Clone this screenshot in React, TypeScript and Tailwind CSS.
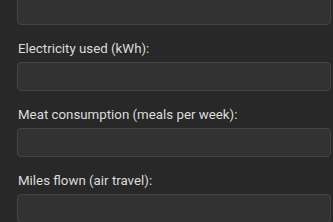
export default function App() {
  const fields = [
    "Electricity used (kWh):",
    "Meat consumption (meals per week):",
    "Miles flown (air travel):",
  ];
  return (
    <div
      className="w-[333px] h-[222px] overflow-hidden bg-[#282828] pl-[17px] pr-[2px]"
      style={{ fontFamily: "Roboto, 'Liberation Sans', sans-serif" }}
    >
      <div className="-mt-[4px] flex flex-col">
        <div className="h-[29px] rounded-[4px] border border-[#444444] bg-[#323232]" />
        {fields.map((f) => (
          <div key={f} className="mt-[14px] flex flex-col">
            <label className="pl-[1px] text-[13.3px] leading-[20px] text-[#dcdcdc]">{f}</label>
            <input
              type="text"
              className="mt-[3px] h-[29px] w-full rounded-[4px] border border-[#444444] bg-[#323232] outline-none"
            />
          </div>
        ))}
      </div>
    </div>
  );
}
